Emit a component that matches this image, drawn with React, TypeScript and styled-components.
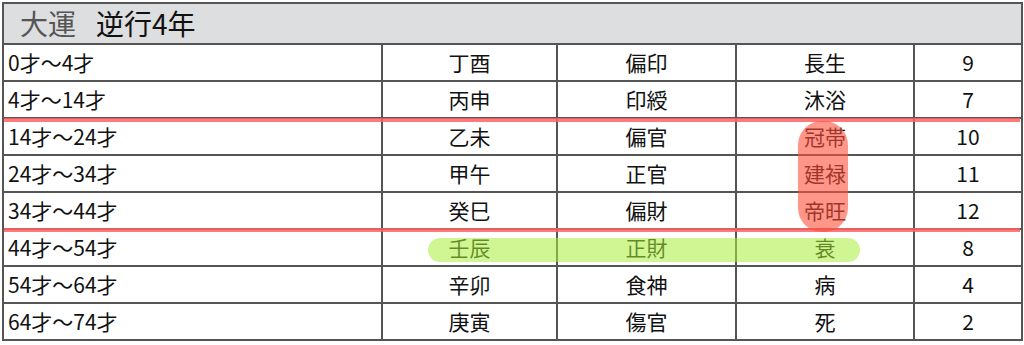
import styled, { createGlobalStyle } from "styled-components";

const GlobalStyle = createGlobalStyle`
  html, body {
    margin: 0;
    padding: 0;
    background: #ffffff;
  }
  body {
    font-family: "Noto Sans CJK JP", "Noto Sans", sans-serif;
    color: #111;
  }
`;

const rows = [
  { age: "0才～4才", kan: "丁酉", star: "偏印", stage: "長生", power: 9 },
  { age: "4才～14才", kan: "丙申", star: "印綬", stage: "沐浴", power: 7 },
  { age: "14才～24才", kan: "乙未", star: "偏官", stage: "冠帯", power: 10 },
  { age: "24才～34才", kan: "甲午", star: "正官", stage: "建禄", power: 11 },
  { age: "34才～44才", kan: "癸巳", star: "偏財", stage: "帝旺", power: 12 },
  { age: "44才～54才", kan: "壬辰", star: "正財", stage: "衰", power: 8 },
  { age: "54才～64才", kan: "辛卯", star: "食神", stage: "病", power: 4 },
  { age: "64才～74才", kan: "庚寅", star: "傷官", stage: "死", power: 2 },
];

const App = () => {
  return (
    <>
      <GlobalStyle />
      <Frame>
        <Table>
          <colgroup>
            <col style={{ width: 379 }} />
            <col style={{ width: 175 }} />
            <col style={{ width: 179 }} />
            <col style={{ width: 178 }} />
            <col style={{ width: 108 }} />
          </colgroup>
          <thead>
            <tr>
              <HeadCell colSpan={5}>
                <Muted>大運</Muted>
                <Strong>逆行4年</Strong>
              </HeadCell>
            </tr>
          </thead>
          <tbody>
            {rows.map((r) => (
              <tr key={r.age}>
                <AgeCell>{r.age}</AgeCell>
                <Cell>{r.kan}</Cell>
                <Cell>{r.star}</Cell>
                <Cell>{r.stage}</Cell>
                <Cell>{r.power}</Cell>
              </tr>
            ))}
          </tbody>
        </Table>

        <RedLine $top={118} />
        <RedLine $top={228} />
        <RedPill />
        <GreenPill />
      </Frame>
    </>
  );
};

const Frame = styled.div`
  position: relative;
  width: 1024px;
  height: 345px;
  padding: 2px 0 0 2px;
  box-sizing: border-box;
`;

const Table = styled.table`
  border-collapse: collapse;
  table-layout: fixed;
  width: 1019px;
  border: 2px solid #555;

  td,
  th {
    border: 2px solid #555;
    padding: 0;
  }
`;

const HeadCell = styled.th`
  height: 39px;
  background: #dddee0;
  text-align: left;
  font-weight: 400;
  font-size: 28px;
  line-height: 39px;
  padding-left: 16px !important;
`;

const Muted = styled.span`
  color: #555;
  margin-right: 20px;
`;

const Strong = styled.span`
  color: #111;
`;

const Cell = styled.td`
  height: 35px;
  font-size: 21px;
  line-height: 35px;
  text-align: center;
  white-space: nowrap;
`;

const AgeCell = styled(Cell)`
  text-align: left;
  padding-left: 4px !important;
`;

const RedLine = styled.div<{ $top: number }>`
  position: absolute;
  left: 4px;
  right: 4px;
  top: ${({ $top }) => $top}px;
  height: 4px;
  background: rgba(255, 100, 100, 0.85);
`;

const RedPill = styled.div`
  position: absolute;
  left: 798px;
  top: 121px;
  width: 50px;
  height: 111px;
  border-radius: 24px;
  background: rgba(255, 80, 60, 0.6);
`;

const GreenPill = styled.div`
  position: absolute;
  left: 428px;
  top: 238px;
  width: 432px;
  height: 24px;
  border-radius: 12px;
  background: rgba(170, 238, 60, 0.55);
`;

export default App;
